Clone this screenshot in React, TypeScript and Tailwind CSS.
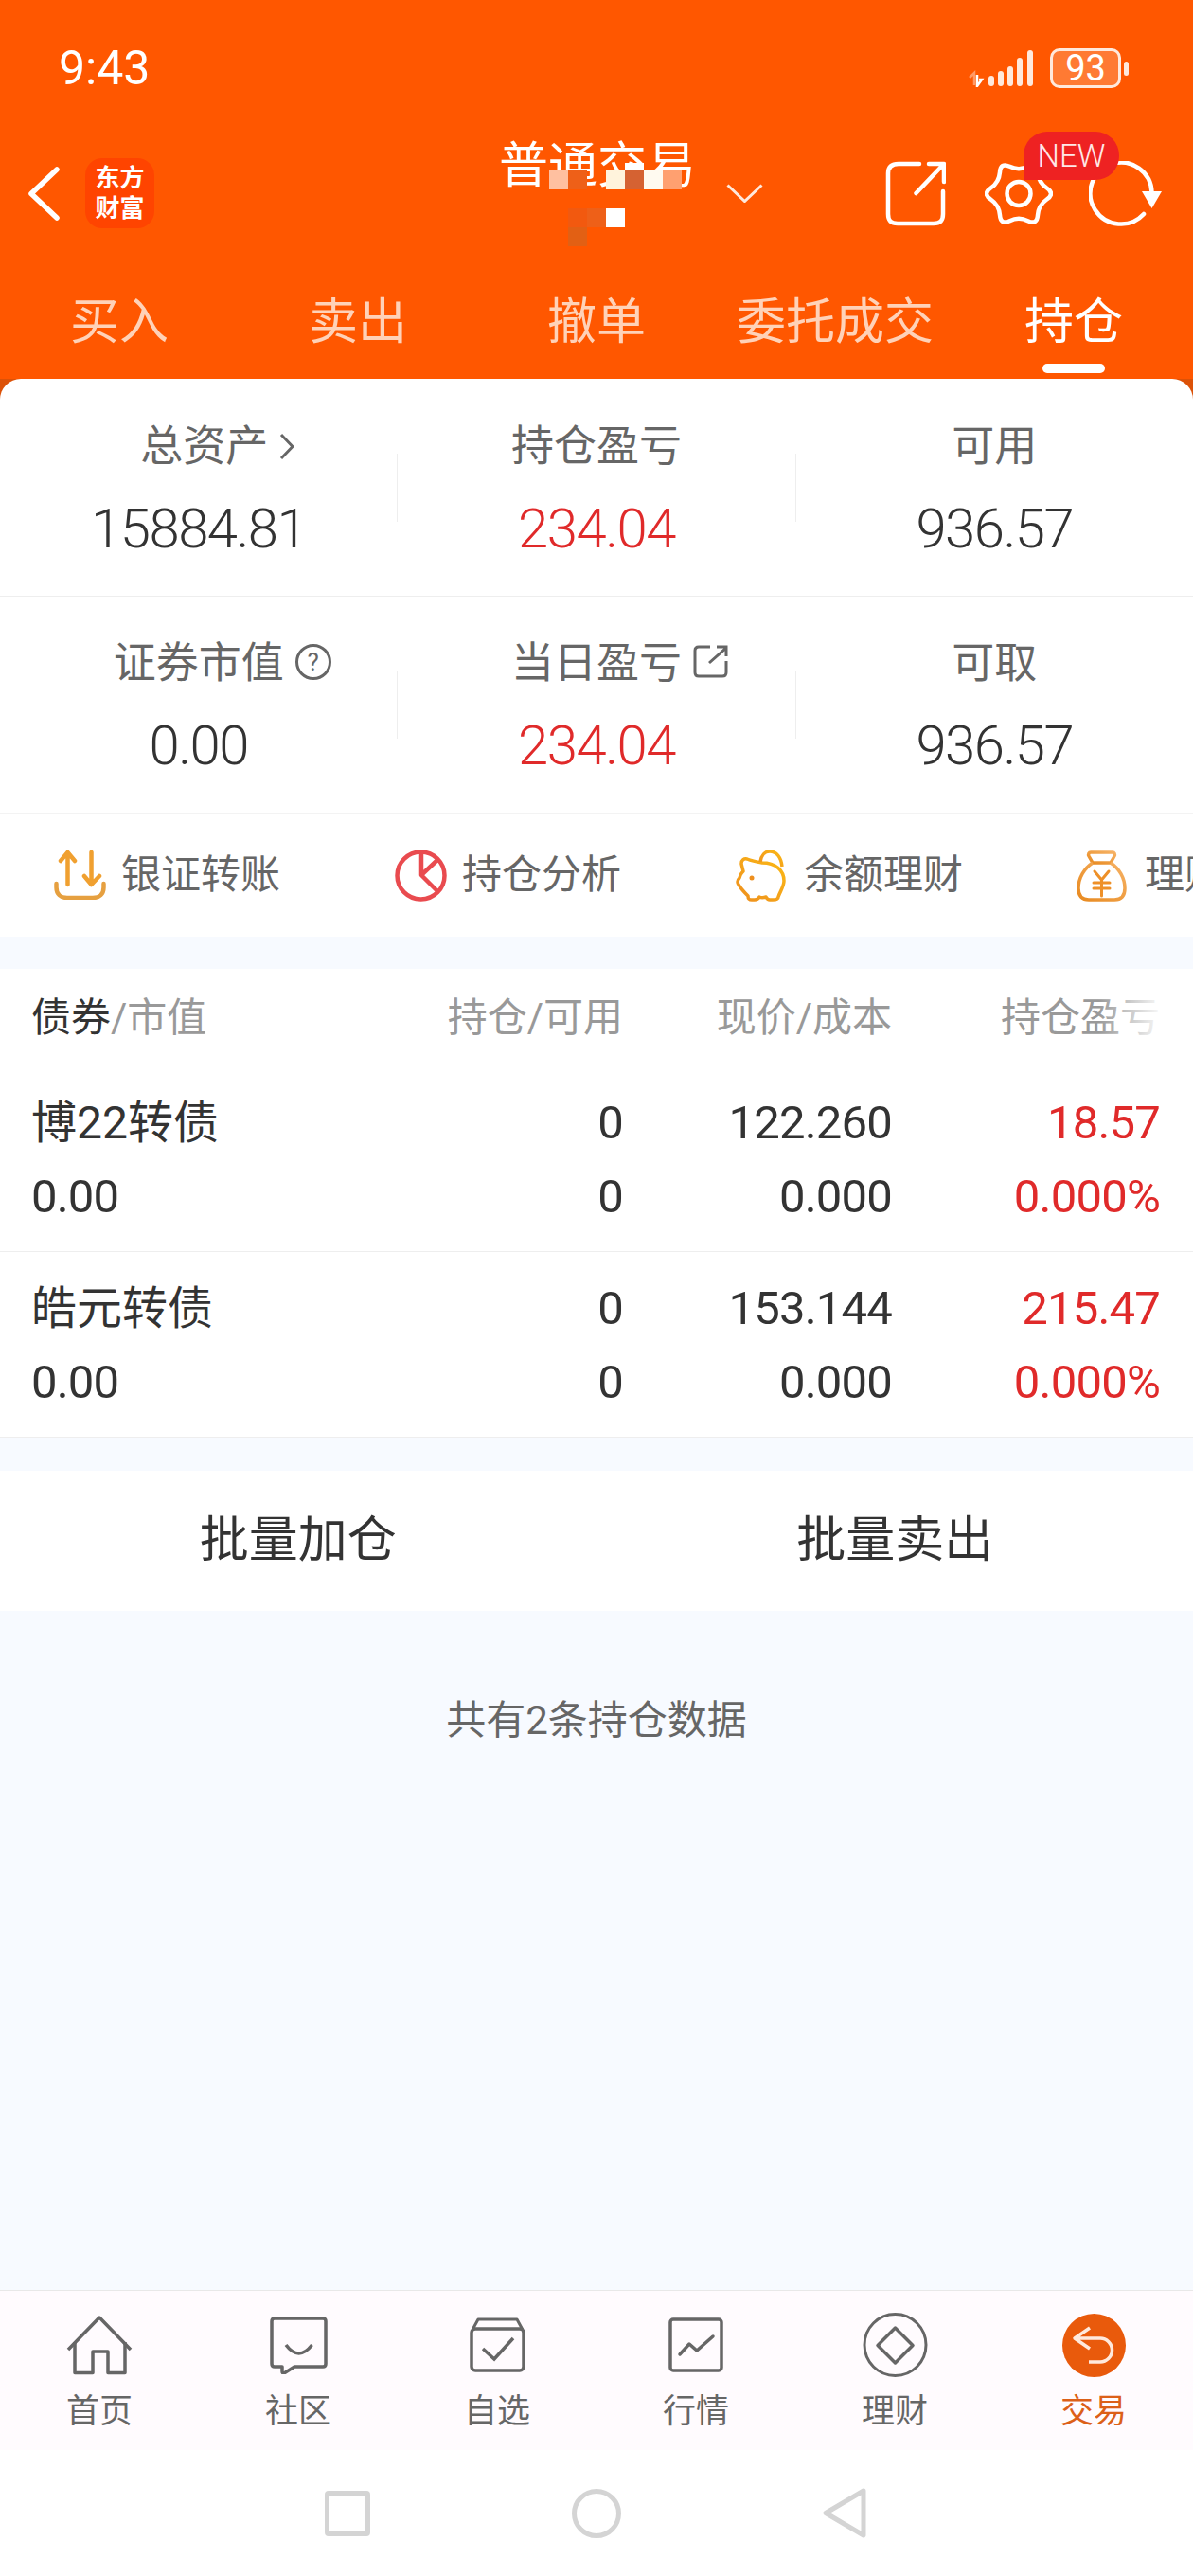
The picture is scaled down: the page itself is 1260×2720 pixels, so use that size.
import React from 'react';

const cogPoints = Array.from({ length: 12 }, (_, i) => {
  const angle = (i * Math.PI) / 6;
  const r = i % 2 === 0 ? 38.5 : 24;
  return [36 + r * Math.cos(angle), 35.5 + r * Math.sin(angle)];
});

const cogPath = cogPoints
  .map((p, i) => {
    const next = cogPoints[(i + 1) % 12];
    const mx = ((p[0] + next[0]) / 2).toFixed(1);
    const my = ((p[1] + next[1]) / 2).toFixed(1);
    return `${i === 0 ? `M${((cogPoints[11][0] + p[0]) / 2).toFixed(1)} ${((cogPoints[11][1] + p[1]) / 2).toFixed(1)} ` : ''}Q${p[0].toFixed(1)} ${p[1].toFixed(1)} ${mx} ${my}`;
  })
  .join(' ');

const SignalIcon = () => (
  <svg width="70" height="40" viewBox="0 0 70 40" className="mr-[16px]">
    <path d="M1 30 L6 25 V38 M7 28 H5" stroke="#ff9a66" strokeWidth="2.5" fill="none" />
    <path d="M9 27 V39 L14 32 H11" stroke="#ffffff" strokeWidth="2.5" fill="none" />
    <rect x="21" y="28" width="6" height="11" rx="3" fill="#ffe9dc" />
    <rect x="31" y="23" width="6" height="16" rx="3" fill="#ffe9dc" />
    <rect x="41" y="18" width="6" height="21" rx="3" fill="#ffe9dc" />
    <rect x="51" y="9" width="6" height="30" rx="3" fill="#ffe9dc" />
    <rect x="62" y="1" width="6" height="38" rx="3" fill="#ffe9dc" />
  </svg>
);

const BackIcon = () => (
  <svg width="34" height="57" viewBox="0 0 34 57" className="shrink-0">
    <path d="M31 3 L4 28.5 L31 54" stroke="#fff" strokeWidth="5.5" strokeLinecap="round" strokeLinejoin="round" fill="none" />
  </svg>
);

const ShareIcon = () => (
  <svg width="64" height="69" viewBox="0 0 64 69" className="shrink-0">
    <path d="M36 3 H14 C6 3 3 7 3 13 V56 C3 63 6 66 13 66 H51 C58 66 61 63 61 56 V32" stroke="#fff" strokeWidth="4.5" strokeLinecap="round" fill="none" />
    <path d="M32.5 34 L61 4 M46 3 H62 V22" stroke="#fff" strokeWidth="4.5" strokeLinecap="round" strokeLinejoin="round" fill="none" />
  </svg>
);

const GearIcon = () => (
  <svg width="72" height="71" viewBox="0 0 72 71" className="shrink-0">
    <path d={cogPath} stroke="#fff" strokeWidth="4.5" fill="none" strokeLinejoin="round" />
    <circle cx="36" cy="35.5" r="12.5" stroke="#fff" strokeWidth="4.5" fill="none" />
  </svg>
);

const RefreshIcon = () => (
  <svg width="77" height="69" viewBox="0 0 77 69" className="shrink-0">
    <path d="M58 56 A32.5 32.5 0 1 1 66.5 33" stroke="#fff" strokeWidth="4.5" strokeLinecap="round" fill="none" />
    <path d="M56 32 H77 L66.5 50 Z" fill="#fff" />
  </svg>
);

const TransferIcon = () => (
  <svg width="55" height="52" viewBox="0 0 55 52" className="shrink-0">
    <path d="M14.5 36 V2 M7 11 L14.5 2 L22 11" stroke="#f0a030" strokeWidth="4.5" strokeLinecap="round" strokeLinejoin="round" fill="none" />
    <path d="M39.5 2 V36 M32 27 L39.5 36 L48 27" stroke="#f0a030" strokeWidth="4.5" strokeLinecap="round" strokeLinejoin="round" fill="none" />
    <path d="M2.5 35 V39 C2.5 46 7 50 14 50 H41 C48 50 52.5 46 52.5 39 V35" stroke="#e6a040" strokeWidth="4.5" strokeLinecap="round" fill="none" />
  </svg>
);

const PieIcon = () => (
  <svg width="55" height="55" viewBox="0 0 55 55" className="shrink-0">
    <circle cx="27.5" cy="27.5" r="25" stroke="#e94b4f" strokeWidth="4.5" fill="none" />
    <path d="M28 3 V27 L45 44 M28 27 L45 11" stroke="#e94b4f" strokeWidth="4.5" strokeLinejoin="round" fill="none" />
  </svg>
);

const PigIcon = () => (
  <svg width="54" height="55" viewBox="0 0 54 55" className="shrink-0">
    <defs>
      <linearGradient id="pig" x1="0" y1="1" x2="1" y2="0">
        <stop offset="0" stopColor="#ee8f1e" />
        <stop offset="1" stopColor="#fbb915" />
      </linearGradient>
    </defs>
    <path
      d="M12 10 C17 12 22 13 28 14 C42 14 51 22 51 33 C51 39 47 44 45 50 C45 52 42 53 39 53 L36 53 C34 53 33 52 32 50 C29 51 27 51 25 50 C24 52 23 53 20 53 L17 53 C14 53 13 52 13 49 C10 46 7 43 5 40 L3 37 C1 34 2 32 4 30 L5 27 C6 25 7 24 8 23 L6 15 C6 11 9 9 12 10 Z"
      stroke="url(#pig)"
      strokeWidth="3.5"
      strokeLinejoin="round"
      fill="none"
    />
    <path d="M26 13 C27 6 31 2 36 2 C43 2 48 8 49 18" stroke="url(#pig)" strokeWidth="3.5" fill="none" />
    <circle cx="17" cy="30" r="2.5" fill="#ee8f1e" />
  </svg>
);

const BagIcon = () => (
  <svg width="53" height="55" viewBox="0 0 53 55" className="shrink-0">
    <defs>
      <linearGradient id="bag" x1="0" y1="1" x2="1" y2="0">
        <stop offset="0" stopColor="#e88a20" />
        <stop offset="1" stopColor="#f6b265" />
      </linearGradient>
    </defs>
    <path d="M15 3 H38 C40 3 41 5 40 7 L36 14 H17 L13 7 C12 5 13 3 15 3 Z" stroke="url(#bag)" strokeWidth="3.5" strokeLinejoin="round" fill="none" />
    <path d="M17 14 C8 20 2 30 2 41 C2 49 6 53 13 53 H40 C47 53 51 49 51 41 C51 30 45 20 36 14" stroke="url(#bag)" strokeWidth="3.5" fill="none" />
    <path d="M19 23 L26.5 32 L34 23 M18 35 H35 M18 41 H35 M26.5 32 V49" stroke="#ee9028" strokeWidth="3" strokeLinecap="round" strokeLinejoin="round" fill="none" />
  </svg>
);

const HomeIcon = () => (
  <svg width="70" height="63" viewBox="0 0 70 63">
    <path d="M2 36 L35 2 L68 36" stroke="#666" strokeWidth="3.5" strokeLinejoin="round" fill="none" />
    <path d="M9 28 V60.5 H28 V38 H44 V60.5 H62 V28" stroke="#666" strokeWidth="3.5" strokeLinejoin="round" fill="none" />
  </svg>
);

const ChatIcon = () => (
  <svg width="61" height="61" viewBox="0 0 61 61">
    <path d="M5 2 H56 Q59 2 59 5 V50 Q59 53 56 53 H26 L15 60 Q13 60 13 58 V53 H5 Q2 53 2 50 V5 Q2 2 5 2 Z" stroke="#666" strokeWidth="3.5" strokeLinejoin="round" fill="none" />
    <path d="M17 30 Q30.5 48 44.5 30" stroke="#666" strokeWidth="3.5" fill="none" />
  </svg>
);

const WatchIcon = () => (
  <svg width="59" height="58" viewBox="0 0 59 58">
    <path d="M3 13 L9 2 H50 L56 13" stroke="#666" strokeWidth="3" strokeLinejoin="round" fill="none" />
    <rect x="2" y="12" width="55" height="44" rx="4" stroke="#666" strokeWidth="3.5" fill="none" />
    <path d="M14 33 L26 44 L46 22" stroke="#666" strokeWidth="3.5" fill="none" />
  </svg>
);

const MarketIcon = () => (
  <svg width="58" height="58" viewBox="0 0 58 58">
    <rect x="2" y="2" width="54" height="54" rx="3" stroke="#666" strokeWidth="3.5" fill="none" />
    <path d="M12 39 L22 28 L30 35 L47 20" stroke="#666" strokeWidth="3.5" strokeLinecap="round" strokeLinejoin="round" fill="none" />
  </svg>
);

const FundIcon = () => (
  <svg width="69" height="68" viewBox="0 0 69 68">
    <circle cx="34.5" cy="34" r="32.5" stroke="#666" strokeWidth="3" fill="none" />
    <path d="M34.5 16 L53 34.5 L34.5 53 L16 34.5 Z" stroke="#666" strokeWidth="3.5" strokeLinejoin="round" fill="none" />
  </svg>
);

const TradeIcon = () => (
  <svg width="67" height="67" viewBox="0 0 67 67">
    <circle cx="33.5" cy="33.5" r="33.5" fill="#e95a0c" />
    <path d="M29 15 L13 26 L29 37 M13 26 H40 A12.5 12.5 0 0 1 40 51 H28" stroke="#ffe9dc" strokeWidth="3.5" strokeLinejoin="round" fill="none" />
  </svg>
);

const tabs = ['买入', '卖出', '撤单', '委托成交', '持仓'];

const Stat = ({
  label,
  value,
  red,
  labelClass,
  icon,
}: {
  label: string;
  value: string;
  red?: boolean;
  labelClass?: string;
  icon?: React.ReactNode;
}) => (
  <div className="flex-1 flex flex-col items-center pt-[47px]">
    <div className={`relative text-[45px] leading-[48px] text-[#666666] ${labelClass || ''}`}>
      {label}
      {icon}
    </div>
    <div className={`mt-[30px] text-[58px] leading-[64px] font-light tracking-[-1.5px] ${red ? 'text-[#e02a2a]' : 'text-[#333333]'}`}>{value}</div>
  </div>
);

const Sep = () => <div className="w-px h-[72px] mt-[78px] bg-[#eeeeee] shrink-0" />;

const Position = ({ name, price, pl }: { name: string; price: string; pl: string }) => (
  <div className="grid grid-cols-[1fr_200px_284px_283px] pl-[33px] pr-[35px] pt-[21px] pb-[18px] border-b border-[#eeeeee] text-[49px] leading-[78px] tracking-[-0.8px] text-[#333333]">
    <div className="text-[48px] tracking-normal">{name}</div>
    <div className="text-right">0</div>
    <div className="text-right">{price}</div>
    <div className="text-right text-[#e02a2a]">{pl}</div>
    <div>0.00</div>
    <div className="text-right">0</div>
    <div className="text-right">0.000</div>
    <div className="text-right text-[#e02a2a]">0.000%</div>
  </div>
);

const NavItem = ({ icon, label, active }: { icon: React.ReactNode; label: string; active?: boolean }) => (
  <div className="flex-1 flex flex-col items-center pt-[22px]">
    <div className="h-[70px] flex items-center justify-center">{icon}</div>
    <div className={`mt-[16px] text-[35px] leading-[40px] ${active ? 'text-[#dc6018]' : 'text-[#666666]'}`}>{label}</div>
  </div>
);

export default function App() {
  return (
    <div className="w-[1260px] h-[2720px] flex flex-col overflow-hidden bg-[#f7faff] font-['Roboto','Noto_Sans_CJK_SC',sans-serif]">
      <header className="bg-[#ff5700] h-[400px] shrink-0 text-white">
        <div className="h-[144px] flex items-center pl-[62px] pr-[68px] justify-between">
          <div className="text-[50px] leading-none">9:43</div>
          <div className="flex items-center">
            <SignalIcon />
            <div className="w-[75px] h-[42px] rounded-[10px] border-[3px] border-[#ffe9dc] bg-[#ff7a33] flex items-center justify-center text-[38px] leading-none">93</div>
            <div className="w-[5px] h-[15px] ml-[3px] rounded-full bg-[#ffe9dc]" />
          </div>
        </div>
        <div className="relative h-[120px] flex items-center pl-[29px]">
          <BackIcon />
          <div className="ml-[27px] w-[73px] h-[74px] rounded-[18px] bg-[#ff4400] flex items-center justify-center text-center text-[26px] leading-[32px] font-bold shrink-0">
            东方
            <br />
            财富
          </div>
          <div className="ml-[364px] w-[201px] self-start mt-[2px] text-[52px] leading-[60px] whitespace-nowrap">普通交易</div>
          <svg width="39" height="20" viewBox="0 0 39 20" className="ml-[39px] shrink-0">
            <path d="M1.5 1.5 L19.5 18.5 L37.5 1.5" stroke="#ffe9dc" strokeWidth="3" fill="none" />
          </svg>
          <div className="ml-[129px]">
            <ShareIcon />
          </div>
          <div className="ml-[41px]">
            <GearIcon />
          </div>
          <div className="ml-[38px]">
            <RefreshIcon />
          </div>
          <div className="absolute left-[580px] top-[36px] w-[20px] h-[20px] bg-[#ffc0a0]" />
          <div className="absolute left-[600px] top-[36px] w-[20px] h-[20px] bg-[#ee6018]" />
          <div className="absolute left-[640px] top-[36px] w-[20px] h-[20px] bg-[#fff3dc]" />
          <div className="absolute left-[660px] top-[28px] w-[20px] h-[8px] bg-[#ffffff]" />
          <div className="absolute left-[660px] top-[36px] w-[20px] h-[20px] bg-[#d56232]" />
          <div className="absolute left-[680px] top-[36px] w-[20px] h-[20px] bg-[#fffaf0]" />
          <div className="absolute left-[700px] top-[36px] w-[20px] h-[20px] bg-[#ffa070]" />
          <div className="absolute left-[600px] top-[76px] w-[20px] h-[20px] bg-[#f2590f]" />
          <div className="absolute left-[620px] top-[76px] w-[20px] h-[20px] bg-[#ee6018]" />
          <div className="absolute left-[640px] top-[76px] w-[20px] h-[20px] bg-[#ffffff]" />
          <div className="absolute left-[600px] top-[96px] w-[20px] h-[20px] bg-[#e26014]" />
          <div className="absolute left-[1081px] top-[-5px] w-[101px] h-[51px] rounded-[25px] rounded-bl-none bg-[#ee2222] flex items-center justify-center text-[33px] leading-none font-light text-[#ffe8e8]">
            NEW
          </div>
        </div>
        <div className="h-[136px] flex">
          {tabs.map((t, i) => (
            <div key={t} className="flex-1 flex flex-col items-center pt-[53px]">
              <div className={`text-[52px] leading-[48px] whitespace-nowrap ${i === 4 ? 'text-white' : 'text-[#ffd2b8]'}`}>{t}</div>
              {i === 4 && <div className="mt-[19px] w-[66px] h-[10px] rounded-full bg-white" />}
            </div>
          ))}
        </div>
      </header>

      <div className="bg-[#dc5208] shrink-0">
        <div className="bg-white rounded-t-[22px]">
          <div className="h-[230px] pt-px flex border-b border-[#eeeeee]">
            <Stat
              label="总资产"
              value="15884.81"
              labelClass="ml-[12px]"
              icon={
                <svg width="16" height="29" viewBox="0 0 16 29" className="absolute left-[calc(100%+12px)] top-[9px]">
                  <path d="M2 2 L14 14.5 L2 27" stroke="#666" strokeWidth="3" fill="none" />
                </svg>
              }
            />
            <Sep />
            <Stat label="持仓盈亏" value="234.04" red />
            <Sep />
            <Stat label="可用" value="936.57" />
          </div>
          <div className="h-[229px] flex border-b border-[#f3f3f3]">
            <Stat
              label="证券市值"
              value="0.00"
              icon={
                <span className="absolute left-[calc(100%+12px)] top-[3px] w-[38px] h-[38px] rounded-full border-[3px] border-[#666666] flex items-center justify-center text-[26px] leading-none">?</span>
              }
            />
            <Sep />
            <Stat
              label="当日盈亏"
              value="234.04"
              red
              icon={
                <svg width="37" height="35" viewBox="0 0 37 35" className="absolute left-[calc(100%+12px)] top-[4px]">
                  <path d="M18 2 H6 Q2 2 2 6 V29 Q2 33 6 33 H31 Q35 33 35 29 V17" stroke="#666" strokeWidth="3" fill="none" />
                  <path d="M17 19 L35 3 M25 2 H35 V12" stroke="#666" strokeWidth="3" fill="none" />
                </svg>
              }
            />
            <Sep />
            <Stat label="可取" value="936.57" />
          </div>
        </div>
      </div>

      <div className="h-[130px] shrink-0 bg-white flex items-center pl-[57px] overflow-hidden text-[42px] leading-none text-[#666666] whitespace-nowrap">
        <TransferIcon />
        <span className="ml-[16px] w-[169px] shrink-0">银证转账</span>
        <div className="ml-[120px] shrink-0">
          <PieIcon />
        </div>
        <span className="ml-[16px] w-[169px] shrink-0">持仓分析</span>
        <div className="ml-[120px] shrink-0">
          <PigIcon />
        </div>
        <span className="ml-[18px] w-[169px] shrink-0">余额理财</span>
        <div className="ml-[119px] shrink-0">
          <BagIcon />
        </div>
        <span className="ml-[19px] shrink-0">理财</span>
      </div>

      <div className="mt-[34px] shrink-0 bg-white">
        <div className="relative h-[103px] grid grid-cols-[1fr_200px_284px_283px] items-center pl-[33px] pr-[35px] text-[42px] leading-[48px] text-[#999999] whitespace-nowrap">
          <div>
            <span className="text-[#333333]">债券</span>/市值
          </div>
          <div className="text-right">持仓/可用</div>
          <div className="text-right">现价/成本</div>
          <div className="text-right">持仓盈亏</div>
          <div className="absolute right-[30px] top-[20px] w-[70px] h-[60px] bg-gradient-to-r from-transparent to-white" />
        </div>
        <Position name="博22转债" price="122.260" pl="18.57" />
        <Position name="皓元转债" price="153.144" pl="215.47" />
      </div>

      <div className="mt-[35px] h-[148px] shrink-0 bg-white flex items-center text-[52px] leading-none text-[#333333]">
        <div className="flex-1 text-center">批量加仓</div>
        <div className="w-px h-[78px] bg-[#eeeeee]" />
        <div className="flex-1 text-center">批量卖出</div>
      </div>

      <div className="flex-1 pt-[92px] text-center text-[42px] leading-[48px] text-[#666666]">共有2条持仓数据</div>

      <nav className="h-[169px] shrink-0 border-t border-[#e8e8e8] bg-[#fffbfe] flex">
        <NavItem icon={<HomeIcon />} label="首页" />
        <NavItem icon={<ChatIcon />} label="社区" />
        <NavItem icon={<WatchIcon />} label="自选" />
        <NavItem icon={<MarketIcon />} label="行情" />
        <NavItem icon={<FundIcon />} label="理财" />
        <NavItem icon={<TradeIcon />} label="交易" active />
      </nav>

      <div className="h-[133px] shrink-0 bg-white flex items-center pl-[343px]">
        <div className="w-[48px] h-[48px] border-[5px] border-[#d4d4d4] rounded-[4px] shrink-0" />
        <div className="ml-[213px] w-[52px] h-[52px] border-[5px] border-[#d4d4d4] rounded-full shrink-0" />
        <svg width="46" height="53" viewBox="0 0 46 53" className="ml-[213px] shrink-0">
          <path d="M43 3 L3 26.5 L43 50 Z" stroke="#d4d4d4" strokeWidth="5" strokeLinejoin="round" fill="none" />
        </svg>
      </div>
    </div>
  );
}
